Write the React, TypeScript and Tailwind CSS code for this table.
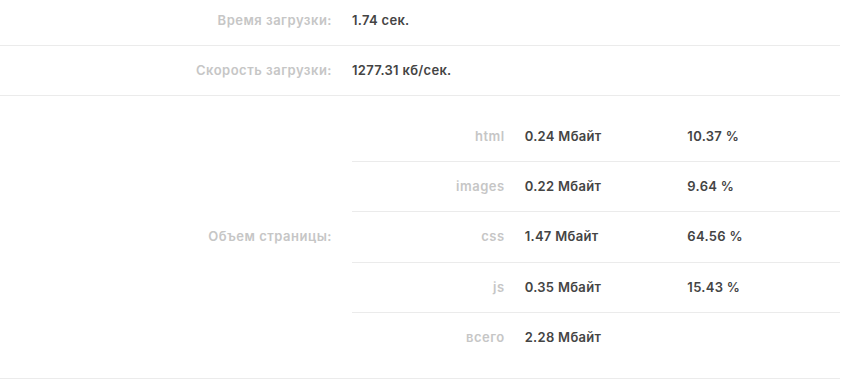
import React from "react";

const font = { fontFamily: "Inter, 'Noto Sans', sans-serif" };

const parts = [
  { name: "html", size: "0.24 Мбайт", pct: "10.37 %" },
  { name: "images", size: "0.22 Мбайт", pct: "9.64 %" },
  { name: "css", size: "1.47 Мбайт", pct: "64.56 %" },
  { name: "js", size: "0.35 Мбайт", pct: "15.43 %" },
  { name: "всего", size: "2.28 Мбайт", pct: "" },
];

const Row = ({ label, children, first }: { label: string; children: React.ReactNode; first?: boolean }) => (
  <div className={`grid grid-cols-[342px_1fr] border-b border-[#ebebeb] ${first ? "-mt-[4px]" : ""}`}>
    <div className="flex items-center justify-end pr-[10px] text-[#c6c6c6] tracking-[0.5px]">{label}</div>
    <div className="flex items-center pl-[10px] text-[#444]">{children}</div>
  </div>
);

export default function App() {
  return (
    <div className="w-[857px] h-[381px] overflow-hidden bg-white">
      <div
        style={font}
        className="w-[840px] text-[13px] font-semibold leading-[17px] tracking-[0.3px]"
      >
        <Row label="Время загрузки:" first>
          <span className="py-4">1.74 сек.</span>
        </Row>
        <Row label="Скорость загрузки:">
          <span className="py-4">1277.31 кб/сек.</span>
        </Row>
        <div className="grid grid-cols-[342px_1fr] border-b border-[#ebebeb]">
          <div className="flex items-center justify-end pr-[10px] text-[#c6c6c6] tracking-[0.5px]">
            Объем страницы:
          </div>
          <div className="py-[15.67px] pl-[10px]">
            {parts.map((p, i) => (
              <div
                key={p.name}
                className={`grid grid-cols-3 py-4 leading-[17.33px] ${
                  i < parts.length - 1 ? "border-b border-[#ebebeb]" : ""
                }`}
              >
                <div className="pr-[10px] text-right text-[#c6c6c6] tracking-[0.5px]">{p.name}</div>
                <div className="pl-[10px] text-[#444]">{p.size}</div>
                <div className="pl-[10px] text-[#444]">{p.pct}</div>
              </div>
            ))}
          </div>
        </div>
      </div>
    </div>
  );
}
